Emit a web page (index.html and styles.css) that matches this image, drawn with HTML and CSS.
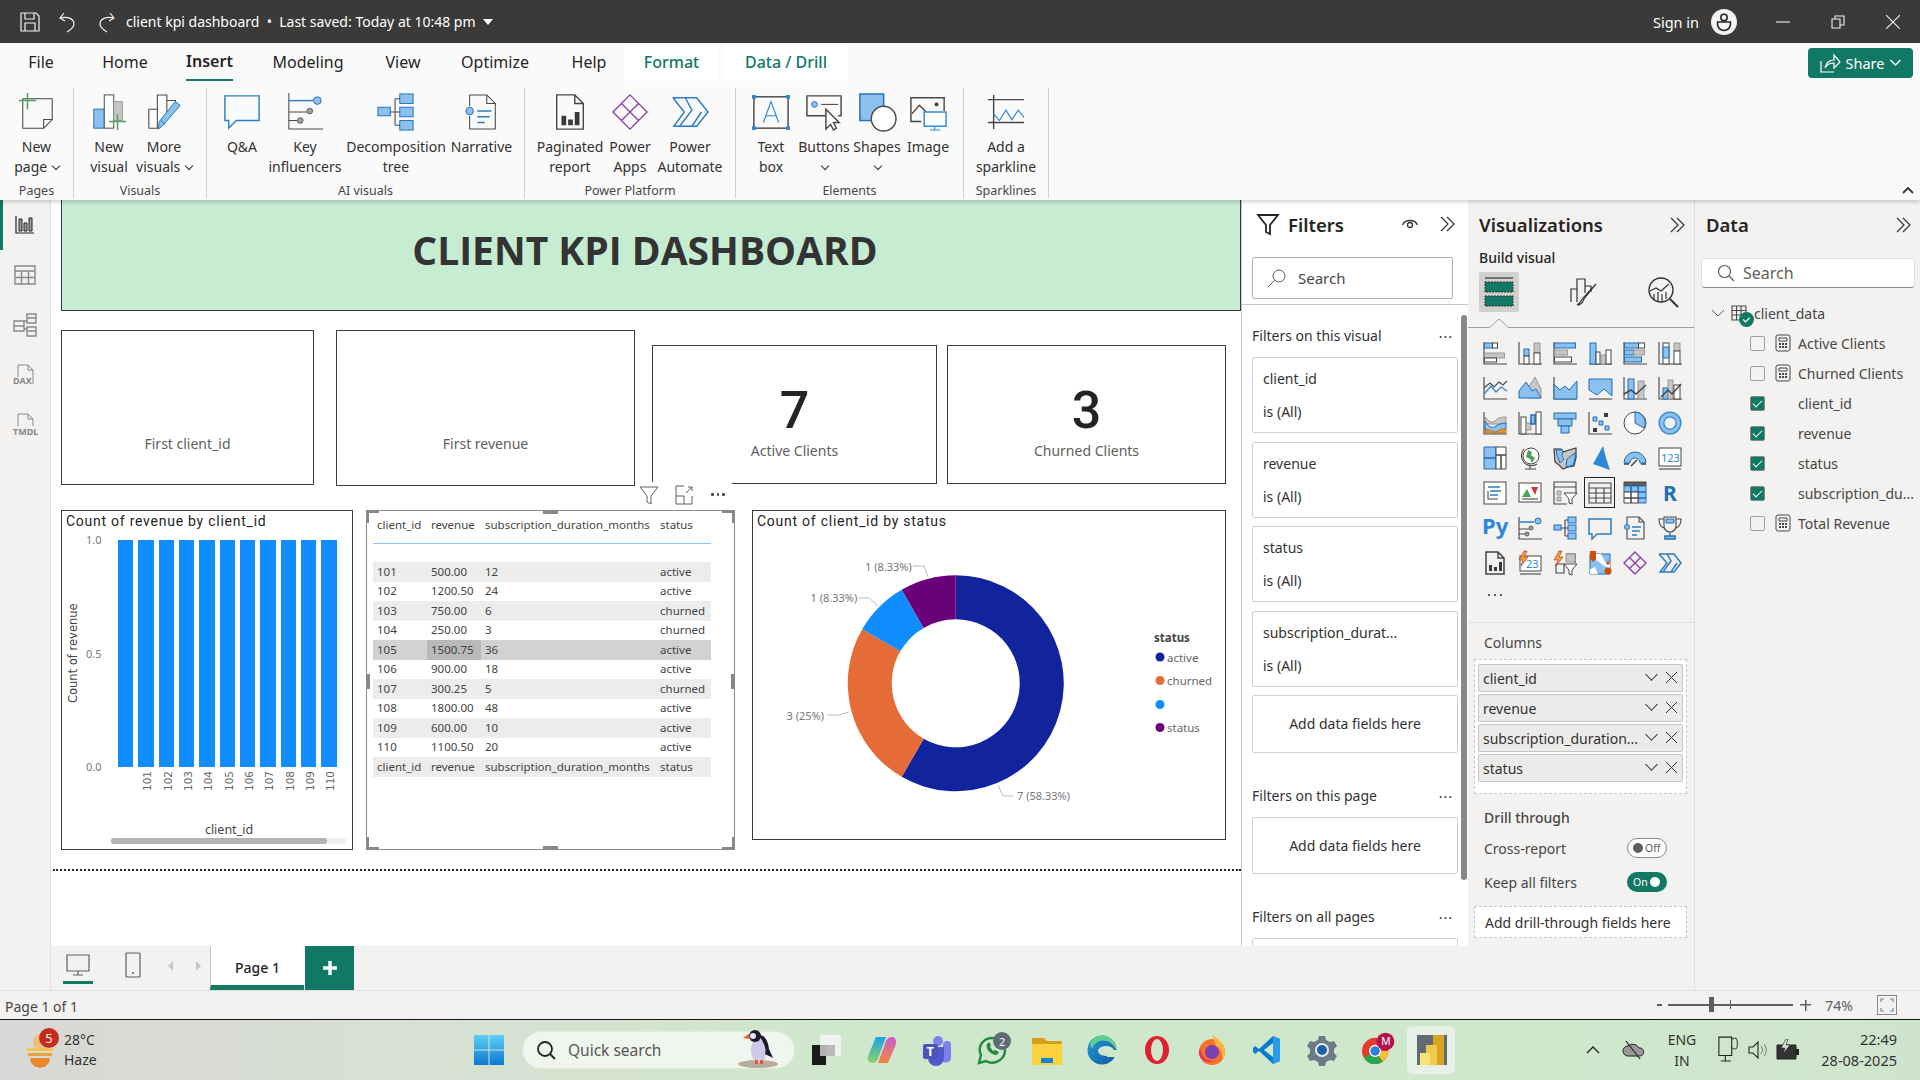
FILE: index.html
```html
<!DOCTYPE html>
<html lang="en">
<head>
    <meta charset="UTF-8">
    <title>client kpi dashboard</title>
    <link rel="stylesheet" href="styles.css">
</head>
<body>
<div class="app">
    <!-- Title bar -->
    <div class="titlebar">
        <svg class="tb-icon tb-save" viewBox="0 0 22 22"><path d="M2 2h15l3 3v15H2zM6 2v6h9V2M6 20v-8h10v8"/></svg>
        <svg class="tb-icon tb-undo" viewBox="0 0 22 22"><path d="M7 2 3 7l5 3M3 7c8-2 14 1 14 6 0 4-4 6-7 8"/></svg>
        <svg class="tb-icon tb-redo" viewBox="0 0 22 22"><path d="m15 2 4 5-5 3M19 7C11 5 5 8 5 13c0 4 4 6 7 8"/></svg>
        <span class="doc-title">client kpi dashboard&nbsp; • &nbsp;Last saved: Today at 10:48 pm</span>
        <span class="caret"></span>
        <span class="sign-in">Sign in</span>
        <svg class="avatar" viewBox="0 0 26 26"><circle cx="13" cy="13" r="13" fill="#f3f2f1"/><circle cx="13" cy="8.5" r="3.2" fill="none" stroke="#222" stroke-width="1.5"/><path d="M6.5 13h13v2a6.5 6.5 0 0 1-13 0z" fill="none" stroke="#222" stroke-width="1.5"/></svg>
        <svg class="win-btn win-min" viewBox="0 0 14 14"><path d="M0 7h14"/></svg>
        <svg class="win-btn win-max" viewBox="0 0 14 14"><path d="M1 4h8v9H1zM4 4V1h9v9H9"/></svg>
        <svg class="win-btn win-close" viewBox="0 0 14 14"><path d="m0 0 14 14M14 0 0 14"/></svg>
    </div>

    <!-- Ribbon -->
    <div class="ribbon">
        <div class="tabs">
            <div class="tab">File</div>
            <div class="tab">Home</div>
            <div class="tab tab-active"><span>Insert</span></div>
            <div class="tab">Modeling</div>
            <div class="tab">View</div>
            <div class="tab">Optimize</div>
            <div class="tab tab-help">Help</div>
            <div class="tab tab-context">Format</div>
            <div class="tab tab-context tab-data">Data / Drill</div>
        </div>
        <div class="share">
            <svg viewBox="0 0 22 22" width="22" height="22"><path d="M2 9v11h13M6 16c1-5 4-8 9-8V3l6 7-6 6v-5c-4 0-7 1-9 5z" fill="none" stroke="#fff" stroke-width="1.2"/></svg>
            <span>Share</span>
            <svg viewBox="0 0 12 8" width="13" height="8"><path d="m1 1 5 5 5-5" fill="none" stroke="#fff" stroke-width="1.3"/></svg>
        </div>
        <div class="groups">
            <div class="group g-pages">
                <div class="items">
                    <div class="item w73">
                        <svg class="rb-icon" viewBox="0 0 40 40"><path class="l" d="M5 6h31v22l-9 9H5z"/><path class="l" d="M36 28h-9v9"/><path class="gr" d="M10 0v17M1 8h18"/></svg>
                        <div>New<br>page <i class="chev"></i></div>
                    </div>
                </div>
                <div class="group-name">Pages</div>
            </div>
            <div class="group g-visuals">
                <div class="items">
                    <div class="item w54">
                        <svg class="rb-icon" viewBox="0 0 40 40"><rect class="u" x="4" y="17" width="11" height="20"/><rect class="w" x="15" y="2" width="10" height="35"/><rect class="k" x="25" y="9" width="9" height="20"/><path class="gr" d="M29 22v17M20 30h18"/></svg>
                        <div>New<br>visual</div>
                    </div>
                    <div class="item w54 item-more">
                        <svg class="rb-icon" viewBox="0 0 40 40"><path class="l" d="M4 37V17h9v20M13 37V2h10v20M23 8h9v9M4 37h10"/><path class="u" d="m14 38 1-8L32 9l5 4-18 21z"/><path class="h" d="m17 29 4 4"/></svg>
                        <div>More<br>visuals <i class="chev"></i></div>
                    </div>
                </div>
                <div class="group-name">Visuals</div>
            </div>
            <div class="group g-ai">
                <div class="items">
                    <div class="item w54">
                        <svg class="rb-icon" viewBox="0 0 40 40"><path class="h2" d="M2 3h36v26H14l-8 8v-8H2z"/></svg>
                        <div>Q&amp;A</div>
                    </div>
                    <div class="item w72">
                        <svg class="rb-icon" viewBox="0 0 40 40"><path class="l" d="M3 0v38h36"/><path class="h2" d="M3 8h26"/><circle class="u" cx="33" cy="8" r="4"/><path class="l" d="M3 20h19M3 29h9"/><circle class="k2" cx="25" cy="19" r="3"/><circle class="k2" cx="15" cy="29" r="3"/></svg>
                        <div>Key<br>influencers</div>
                    </div>
                    <div class="item w110">
                        <svg class="rb-icon" viewBox="0 0 40 40"><rect class="u" x="1" y="15" width="13" height="9"/><rect class="u" x="24" y="1" width="14" height="10"/><rect class="u" x="24" y="15" width="14" height="10"/><rect class="u" x="24" y="29" width="14" height="10"/><path class="l" d="M14 20h10M19 6v28M19 6h5M19 34h5"/></svg>
                        <div>Decomposition<br>tree</div>
                    </div>
                    <div class="item w61">
                        <svg class="rb-icon" viewBox="0 0 40 40"><path class="l" d="M7 14V2h18l9 9v27H7V24"/><path class="l" d="M25 2v9h9"/><circle class="u" cx="7" cy="19" r="4"/><path class="h2" d="M15 19h15M15 25h13M15 31h8"/></svg>
                        <div>Narrative</div>
                    </div>
                </div>
                <div class="group-name">AI visuals</div>
            </div>
            <div class="group g-power">
                <div class="items">
                    <div class="item w60">
                        <svg class="rb-icon" viewBox="0 0 40 40"><path class="l2" d="M6 2h19l9 9v27H6z"/><path class="l2" d="M25 2v9h9"/><path class="dk" d="M11 24h5v10h-5zM18 28h5v6h-5zM25 20h5v14h-5z"/></svg>
                        <div>Paginated<br>report</div>
                    </div>
                    <div class="item w60">
                        <svg class="rb-icon" viewBox="0 0 40 40"><path class="pu" d="M20 2 38 20 20 38 2 20ZM11 11 29 29M29 11 11 29"/></svg>
                        <div>Power<br>Apps</div>
                    </div>
                    <div class="item w60">
                        <svg class="rb-icon" viewBox="0 0 40 40"><path class="h2" d="M2 5h25l12 15-12 15H9l13-17L15 5M2 5l12 15L3 35h6"/><path class="h2" d="m22 35 10-15"/></svg>
                        <div>Power<br>Automate</div>
                    </div>
                </div>
                <div class="group-name">Power Platform</div>
            </div>
            <div class="group g-elements">
                <div class="items">
                    <div class="item w46">
                        <svg class="rb-icon" viewBox="0 0 40 40"><rect class="l2" x="2" y="4" width="36" height="33"/><path class="dot" d="M0 2h4v4H0zM36 2h4v4h-4zM0 35h4v4H0zM36 35h4v4h-4z"/><path class="h" d="m12 31 8-22 8 22M15 24h10"/></svg>
                        <div>Text<br>box</div>
                    </div>
                    <div class="item w60">
                        <svg class="rb-icon" viewBox="0 0 40 40"><path class="l2" d="M24 24H2V3h36v21h-3"/><circle class="u" cx="10" cy="12" r="3"/><path class="l" d="M17 12h18"/><path class="w2" d="M22 17v21l5-5 3 6 3-2-3-6h6z"/></svg>
                        <div>Buttons<br><i class="chev"></i></div>
                    </div>
                    <div class="item w46">
                        <svg class="rb-icon" viewBox="0 0 40 40"><rect class="u2" x="2" y="1" width="25" height="28"/><circle class="w2" cx="27" cy="27" r="13"/></svg>
                        <div>Shapes<br><i class="chev"></i></div>
                    </div>
                    <div class="item w56">
                        <svg class="rb-icon" viewBox="0 0 40 40"><path class="l2" d="M13 30H2V5h35v14"/><path class="l2" d="m3 22 8-9 7 7"/><circle class="dk" cx="29" cy="12" r="2"/><rect class="h3" x="16" y="20" width="23" height="15"/><path class="h" d="M27 35v4M22 39h11"/></svg>
                        <div>Image</div>
                    </div>
                </div>
                <div class="group-name">Elements</div>
            </div>
            <div class="group g-spark">
                <div class="items">
                    <div class="item w84">
                        <svg class="rb-icon" viewBox="0 0 40 40"><path class="l2" d="M7 2v36M1 7h38M1 31h38"/><path class="h" d="m7 22 6 7 7-11 6 10 7-10 6 8"/></svg>
                        <div>Add a<br>sparkline</div>
                    </div>
                </div>
                <div class="group-name">Sparklines</div>
            </div>
        </div>
        <svg class="collapse" viewBox="0 0 12 8" width="12" height="8"><path d="m1 7 5-5 5 5" fill="none" stroke="#333" stroke-width="1.8"/></svg>
    </div>

    <div class="main">
        <!-- View switcher -->
        <div class="rail">
            <div class="rail-item rail-active">
                <svg viewBox="0 0 20 20" width="20" height="20"><path d="M1 1v17h18" fill="none" stroke="#222" stroke-width="1.2"/><path d="M4 4h3v12H4zM9 8h3v8H9zM14 3h3v13h-3z" fill="#a19f9d" stroke="#222"/></svg>
            </div>
            <div class="rail-item">
                <svg viewBox="0 0 22 20" width="22" height="20"><path d="M1 1h20v18H1zM1 6h20M1 12.500h20M7.500 6v13M14.500 6v13" fill="none" stroke="#8a8886" stroke-width="1.4"/></svg>
            </div>
            <div class="rail-item">
                <svg viewBox="0 0 24 24" width="24" height="24"><path d="M1 8h10v10H1zM1 13h10M14 1h9v9h-9zM14 5h9M14 14h9v9h-9zM14 18h9M11 8h3M11 16h3" fill="none" stroke="#8a8886" stroke-width="1.4"/></svg>
            </div>
            <div class="rail-item">
                <svg viewBox="0 0 24 24" width="24" height="24"><path d="M5 14V2h10l5 5v14" fill="none" stroke="#8a8886"/><path d="M15 2v5h5" fill="none" stroke="#8a8886"/><text class="rail-txt" x="0" y="21">DAX</text></svg>
            </div>
            <div class="rail-item">
                <svg viewBox="0 0 26 24" width="26" height="24"><path d="M6 13V1h10l5 5v7" fill="none" stroke="#8a8886"/><path d="M16 1v5h5" fill="none" stroke="#8a8886"/><text class="rail-txt" x="1" y="22">TMDL</text></svg>
            </div>
        </div>

        <div class="center">
            <div class="center-top">
                <!-- Report canvas -->
                <div class="canvas">
                    <div class="visual banner">CLIENT KPI DASHBOARD</div>

                    <div class="visual card c-first-id"><div class="card-label">First client_id</div></div>
                    <div class="visual card c-first-rev"><div class="card-label">First revenue</div></div>
                    <div class="visual card c-active"><div class="card-value">7</div><div class="card-label">Active Clients</div></div>
                    <div class="visual card c-churned"><div class="card-value">3</div><div class="card-label">Churned Clients</div></div>

                    <div class="visual bar-visual">
                        <div class="viz-title">Count of revenue by client_id</div>
                        <div class="bar-body">
                            <div class="y-title">Count of revenue</div>
                            <div class="y-ticks"><span>1.0</span><span>0.5</span><span>0.0</span></div>
                            <div class="plot-col">
                                <div class="plot">
                                    <i></i><i></i><i></i><i></i><i></i><i></i><i></i><i></i><i></i><i></i><i></i>
                                </div>
                                <div class="x-ticks">
                                    <span></span><span>101</span><span>102</span><span>103</span><span>104</span><span>105</span><span>106</span><span>107</span><span>108</span><span>109</span><span>110</span>
                                </div>
                            </div>
                        </div>
                        <div class="x-title">client_id</div>
                        <div class="h-scroll"><div class="h-thumb"></div></div>
                    </div>

                    <div class="visual table-visual">
                        <table class="data-table">
                            <thead>
                                <tr><th>client_id</th><th>revenue</th><th>subscription_duration_months</th><th>status</th></tr>
                            </thead>
                            <tbody>
                                <tr class="blank"><td colspan="4"></td></tr>
                                <tr class="odd"><td>101</td><td>500.00</td><td>12</td><td>active</td></tr>
                                <tr><td>102</td><td>1200.50</td><td>24</td><td>active</td></tr>
                                <tr class="odd"><td>103</td><td>750.00</td><td>6</td><td>churned</td></tr>
                                <tr><td>104</td><td>250.00</td><td>3</td><td>churned</td></tr>
                                <tr class="sel"><td>105</td><td class="sel-cell">1500.75</td><td>36</td><td>active</td></tr>
                                <tr><td>106</td><td>900.00</td><td>18</td><td>active</td></tr>
                                <tr class="odd"><td>107</td><td>300.25</td><td>5</td><td>churned</td></tr>
                                <tr><td>108</td><td>1800.00</td><td>48</td><td>active</td></tr>
                                <tr class="odd"><td>109</td><td>600.00</td><td>10</td><td>active</td></tr>
                                <tr><td>110</td><td>1100.50</td><td>20</td><td>active</td></tr>
                                <tr class="odd"><td>client_id</td><td>revenue</td><td>subscription_duration_months</td><td>status</td></tr>
                            </tbody>
                        </table>
                        <i class="hd hd-tl"></i><i class="hd hd-tr"></i><i class="hd hd-bl"></i><i class="hd hd-br"></i>
                        <i class="hd hd-t"></i><i class="hd hd-b"></i><i class="hd hd-l"></i><i class="hd hd-r"></i>
                    </div>

                    <div class="visual-head">
                        <svg viewBox="0 0 22 22" width="22" height="22"><path d="M2 3h18l-7 9v8l-4-2v-6z" fill="none" stroke="#605e5c"/></svg>
                        <svg viewBox="0 0 20 20" width="20" height="20"><path d="M10 1H2v18h16v-8M2 11h8v8M12 8l6-6M14 2h4v4" fill="none" stroke="#605e5c"/></svg>
                        <span class="head-dots"><i></i><i></i><i></i></span>
                    </div>

                    <div class="visual donut-visual">
                        <div class="viz-title">Count of client_id by status</div>
                        <svg class="donut-svg" viewBox="753 531 472 307" width="472" height="307">
                            <path fill="#12239e" d="M955.700 575.300A108 108 0 1 1 901.700 776.800L923.700 738.700A64 64 0 1 0 955.700 619.300Z"/>
                            <path fill="#e66c37" d="M901.700 776.800A108 108 0 0 1 862.200 629.300L900.300 651.300A64 64 0 0 0 923.700 738.700Z"/>
                            <path fill="#118dff" d="M862.200 629.300A108 108 0 0 1 901.700 589.800L923.700 627.900A64 64 0 0 0 900.300 651.300Z"/>
                            <path fill="#6b007b" d="M901.700 589.800A108 108 0 0 1 955.700 575.300V619.300A64 64 0 0 0 923.700 627.900Z"/>
                            <path class="leader" d="M913 566h11l4 11M859 598h10l9 8M827 715h12l10-3M998 785l5 11h10"/>
                            <text class="d-label" x="865" y="571">1 (8.33%)</text>
                            <text class="d-label" x="810.500" y="602">1 (8.33%)</text>
                            <text class="d-label" x="786.500" y="720">3 (25%)</text>
                            <text class="d-label" x="1017" y="800">7 (58.33%)</text>
                            <text class="lg-title" x="1154" y="642">status</text>
                            <circle cx="1160" cy="657" r="4.500" fill="#12239e"/><text class="lg-item" x="1167" y="662">active</text>
                            <circle cx="1160" cy="680.500" r="4.500" fill="#e66c37"/><text class="lg-item" x="1167" y="685">churned</text>
                            <circle cx="1160" cy="704.500" r="4.500" fill="#118dff"/>
                            <circle cx="1160" cy="727.500" r="4.500" fill="#6b007b"/><text class="lg-item" x="1167" y="732">status</text>
                        </svg>
                    </div>

                    <div class="page-edge"></div>
                </div>

                <!-- Filters pane -->
                <div class="filters">
                    <div class="pane-head">
                        <svg class="funnel" viewBox="0 0 24 24" width="24" height="24"><path d="M2 3h20l-8 10v9l-4-2v-7z" fill="none" stroke="#252423" stroke-width="1.800"/></svg>
                        <span class="pane-title">Filters</span>
                        <svg class="eye" viewBox="0 0 18 14" width="18" height="14"><path d="M1.500 8C4 2 14 2 16.500 8" fill="none" stroke="#333" stroke-width="1.300"/><circle cx="9" cy="8" r="2.500" fill="none" stroke="#333" stroke-width="1.300"/></svg>
                        <svg class="double" viewBox="0 0 16 16" width="16" height="16"><path d="m1 1 7 7-7 7M7 1l7 7-7 7" fill="none" stroke="#333" stroke-width="1.200"/></svg>
                    </div>
                    <div class="f-search">
                        <svg viewBox="0 0 20 20" width="20" height="20"><circle cx="12" cy="8" r="6" fill="none" stroke="#605e5c"/><path d="m8 12-7 7" stroke="#605e5c" fill="none"/></svg>
                        <span>Search</span>
                    </div>
                    <div class="f-divider"></div>
                    <div class="f-section f-first">Filters on this visual<span class="more">...</span></div>
                    <div class="f-card"><div>client_id</div><div>is (All)</div></div>
                    <div class="f-card"><div>revenue</div><div>is (All)</div></div>
                    <div class="f-card"><div>status</div><div>is (All)</div></div>
                    <div class="f-card"><div>subscription_durat...</div><div>is (All)</div></div>
                    <div class="f-add f-add-tall">Add data fields here</div>
                    <div class="f-section">Filters on this page<span class="more">...</span></div>
                    <div class="f-add">Add data fields here</div>
                    <div class="f-section">Filters on all pages<span class="more">...</span></div>
                    <div class="f-add"></div>
                    <div class="v-scroll"></div>
                </div>
            </div>

            <!-- Page tabs -->
            <div class="pagebar">
                <div class="layout-btn layout-active">
                    <svg viewBox="0 0 24 24" width="24" height="24"><path d="M1 2h22v16H1zM12 18v4M7 22h10" fill="none" stroke="#605e5c" stroke-width="1.200"/></svg>
                </div>
                <div class="layout-btn layout-phone">
                    <svg viewBox="0 0 16 26" width="16" height="26"><rect x="1" y="1" width="14" height="24" rx="1" fill="none" stroke="#605e5c" stroke-width="1.200"/><circle cx="8" cy="21" r="1" fill="#605e5c"/></svg>
                </div>
                <i class="page-arrow arrow-left"></i>
                <i class="page-arrow arrow-right"></i>
                <div class="page-tab">Page 1</div>
                <div class="page-add">
                    <svg viewBox="0 0 14 14" width="14" height="14"><path d="M7 0v14M0 7h14" stroke="#fff" stroke-width="3.400"/></svg>
                </div>
            </div>
        </div>

        <!-- Visualizations pane -->
        <div class="viz-pane">
            <div class="viz-head"><span class="pane-title">Visualizations</span>
                <svg class="double" viewBox="0 0 16 16" width="16" height="16"><path d="m1 1 7 7-7 7M7 1l7 7-7 7" fill="none" stroke="#333" stroke-width="1.200"/></svg>
            </div>
            <div class="build-label">Build visual</div>
            <div class="build-tabs">
                <div class="build-tab build-tab-active">
                    <svg viewBox="0 0 32 32" width="32" height="32"><path d="M2 2h28" stroke="#333" stroke-width="1.200"/><rect x="2" y="6" width="28" height="10" fill="#117865" stroke="#333" stroke-dasharray="2 1"/><rect x="2" y="20" width="28" height="10" fill="#117865" stroke="#333" stroke-dasharray="2 1"/></svg>
                </div>
                <div class="build-tab">
                    <svg viewBox="0 0 30 30" width="30" height="30"><path d="M3 25V12h6v13M9 12V2h8v14M17 9h6v6" fill="none" stroke="#333" stroke-width="1.200"/><path d="M9 28c5 0 6-4 7-6l12-15-11 12c-3 2-4 7-8 9z" fill="#fff" stroke="#333" stroke-width="1.200"/></svg>
                </div>
                <div class="build-tab">
                    <svg viewBox="0 0 32 32" width="32" height="32"><circle cx="14" cy="14" r="12" fill="none" stroke="#333" stroke-width="1.400"/><path d="m23 23 8 8" stroke="#333" stroke-width="2"/><path d="m3 15 6-3 5 3 8-7" fill="none" stroke="#333" stroke-width="1.200"/><path d="M7 18v6M11 16v9M15 18v7M19 16v7" stroke="#333" stroke-width="1.200"/></svg>
                </div>
            </div>
            <div class="build-line"><svg viewBox="0 0 22 10" width="22" height="10"><path d="M0 10h1l10-9 10 9h1" fill="#f3f2f1" stroke="#a19f9d"/></svg></div>

            <div class="gallery">
                <!-- row 1 -->
                <div class="gi"><svg viewBox="0 0 24 24"><path class="l" d="M1 1v22h23"/><rect class="u" x="1.500" y="2" width="8" height="5"/><rect class="w" x="9.500" y="2" width="5" height="5"/><rect class="k" x="1.500" y="12" width="20" height="5"/><rect class="w" x="1.500" y="17" width="12" height="4"/></svg></div>
                <div class="gi"><svg viewBox="0 0 24 24"><path class="l" d="M1 1v22h23"/><rect class="u" x="6" y="8" width="5" height="7"/><rect class="w" x="6" y="15" width="5" height="8"/><rect class="k" x="16" y="2" width="6" height="10"/><rect class="w" x="16" y="12" width="6" height="11"/></svg></div>
                <div class="gi"><svg viewBox="0 0 24 24"><path class="l" d="M1 1v22h23"/><rect class="u" x="1.500" y="2" width="21" height="5"/><rect class="k" x="1.500" y="9" width="13" height="5"/><rect class="w" x="1.500" y="16" width="17" height="5"/></svg></div>
                <div class="gi"><svg viewBox="0 0 24 24"><path class="l" d="M1 23h23"/><rect class="u" x="2" y="2" width="6" height="21"/><rect class="w" x="8" y="11" width="4" height="12"/><rect class="k" x="13" y="14" width="5" height="9"/><rect class="w" x="18" y="9" width="5" height="14"/></svg></div>
                <div class="gi"><svg viewBox="0 0 24 24"><path class="l" d="M1 1v22h23"/><rect class="u" x="1.500" y="2" width="14" height="5"/><rect class="w" x="15.500" y="2" width="6" height="5"/><rect class="u" x="1.500" y="9" width="9" height="5"/><rect class="k" x="10.500" y="9" width="11" height="5"/><rect class="u" x="1.500" y="16" width="17" height="5"/></svg></div>
                <div class="gi"><svg viewBox="0 0 24 24"><path class="l" d="M1 1v22h23"/><rect class="w" x="5" y="2" width="6" height="21"/><rect class="u" x="5" y="6" width="6" height="11"/><rect class="k" x="16" y="2" width="6" height="8"/><rect class="w" x="16" y="10" width="6" height="13"/></svg></div>
                <!-- row 2 -->
                <div class="gi"><svg viewBox="0 0 24 24"><path class="l" d="M1 1v22h23M1 12l6-5 4 4 5-5 4 3 4-4"/><path class="h" d="m1 18 7-8 5 6 5-5 6 4"/></svg></div>
                <div class="gi"><svg viewBox="0 0 24 24"><path class="k" d="m10 12 7-11 6 12v9H10z"/><path class="u" d="M1 22v-7l7-9 6 9 4-2 5 9z"/></svg></div>
                <div class="gi"><svg viewBox="0 0 24 24"><path class="l" d="M1 1v22h23"/><path class="u" d="M1 8l6 6 5-4 4 4 8-9v18H1z"/></svg></div>
                <div class="gi"><svg viewBox="0 0 24 24"><path class="l" d="M1 23h23"/><path class="u" d="M1 3h23v17l-8-7-7 6-8-5z"/></svg></div>
                <div class="gi"><svg viewBox="0 0 24 24"><path class="l" d="M1 1v22h23"/><rect class="u" x="5" y="3" width="6" height="20"/><rect class="k" x="15" y="5" width="6" height="18"/><path class="l2" d="m1 18 7-4 5 4 10-9"/></svg></div>
                <div class="gi"><svg viewBox="0 0 24 24"><path class="l" d="M1 1v22h23"/><rect class="u" x="5" y="12" width="5" height="11"/><rect class="k" x="10" y="4" width="5" height="19"/><rect class="w" x="16" y="9" width="6" height="14"/><path class="l2" d="m3 21 7-7 4 4 9-10"/></svg></div>
                <!-- row 3 -->
                <div class="gi"><svg viewBox="0 0 24 24"><path class="l" d="M1 1v22h23"/><path class="k" d="M2 6c5 6 8 6 11 3 3-3 7-3 10-3v7H2z"/><path class="u" d="M2 10c5 8 8 7 11 5s7-3 10-3v6c-4 0-7 5-11 4s-6-3-10-3z"/><path class="or" d="M2 19h6l3 2 4-1 3-2h5v4H2z"/></svg></div>
                <div class="gi"><svg viewBox="0 0 24 24"><path class="l" d="M1 1v22h23"/><rect class="w" x="3" y="6" width="5" height="17"/><rect class="k" x="8" y="12" width="5" height="7"/><rect class="u2" x="13" y="4" width="4" height="9"/><rect class="w" x="18" y="1" width="5" height="22"/></svg></div>
                <div class="gi"><svg viewBox="0 0 24 24"><rect class="u" x="1" y="2" width="22" height="6"/><rect class="u" x="5" y="8" width="14" height="7"/><rect class="u" x="8" y="15" width="8" height="7"/></svg></div>
                <div class="gi"><svg viewBox="0 0 24 24"><path class="l" d="M1 1v22h23"/><path class="dk" d="M16 2h4v4h-4zM5 17h4v4H5z"/><path class="u" d="M5 6h4v4H5zM11 10h4v4h-4zM17 15h4v4h-4z"/></svg></div>
                <div class="gi"><svg viewBox="0 0 24 24"><circle class="w" cx="12" cy="12" r="11"/><path class="u" d="M12 1a11 11 0 0 1 9 16l-9-5z"/></svg></div>
                <div class="gi"><svg viewBox="0 0 24 24"><circle class="ring" cx="12" cy="12" r="8.500"/><circle class="ring-g" cx="12" cy="12" r="8.500"/></svg></div>
                <!-- row 4 -->
                <div class="gi"><svg viewBox="0 0 24 24"><path class="u" d="M1 1h12v11H1zM1 12h12v11H1z"/><path class="w" d="M13 1h10v8H13zM13 9h5v14h-5zM18 9h5v14h-5z"/></svg></div>
                <div class="gi"><svg viewBox="0 0 24 24"><path class="l" d="M7 23h11M12 19v4M6 3a10 10 0 0 0 13 15"/><circle class="w" cx="13" cy="10" r="8"/><path class="gn" d="M10 4l4 2-1 3 4 3-3 5-2-4-4-2z"/></svg></div>
                <div class="gi"><svg viewBox="0 0 24 24"><path class="k" d="M1 3h7l2 3 6-2 7-2v10l-2 8-6 1-5 2-4-4-4-3z"/><path class="l" d="M1 3h7l2 3 6-2 7-2v10l-2 8-6 1-5 2-4-4-4-3z"/><path class="u" d="M3 4h7l-1 6 2 3-4 4-3-8zM14 13l8-6v5l-2 7-7 2z"/></svg></div>
                <div class="gi"><svg viewBox="0 0 24 24"><path class="az" d="M15 0 5 18l17 6-4-12z"/></svg></div>
                <div class="gi"><svg viewBox="0 0 24 24"><path class="u" d="M1 17a11 11 0 0 1 22 0h-6a5 5 0 0 0-10 0z"/><path class="l2" d="M1 18h5M18 18h5M8 20l6-6"/></svg></div>
                <div class="gi"><svg viewBox="0 0 24 24"><rect class="w" x="1" y="2" width="22" height="18"/><path class="l" d="M1 23h22"/><text class="g-txt" x="3" y="16">123</text></svg></div>
                <!-- row 5 -->
                <div class="gi"><svg viewBox="0 0 24 24"><rect class="w" x="1" y="1" width="22" height="22"/><path class="h2" d="M5 6h12M7 10h11M7 14h8"/><path class="l" d="M5 10v8h10"/></svg></div>
                <div class="gi"><svg viewBox="0 0 24 24"><rect class="w" x="1" y="2" width="22" height="19"/><path fill="#4ea45f" d="m4 16 5-8 4 8z"/><path fill="#d13438" d="m13 6 7 0-3 8z"/><path class="l" d="M4 18h16"/></svg></div>
                <div class="gi"><svg viewBox="0 0 24 24"><path class="l" d="M14 23H1V1h22v12M1 6h22"/><path class="k" d="M4 10h4v4H4zM4 16h4v4H4z"/><path class="w" d="M11 12h13l-5 6v5l-3-1v-4z"/></svg></div>
                <div class="gi gi-selected"><svg viewBox="0 0 24 24"><path class="l" d="M1 2h22v20H1zM1 7h22M1 12h22M1 17h22M8 7v15M16 7v15"/></svg></div>
                <div class="gi"><svg viewBox="0 0 24 24"><path class="dk2" d="M1 1h22v4H1z"/><path class="u" d="M1 5h7v6H1zM8 5h7v6H8zM15 5h8v6h-8zM15 11h8v6h-8zM15 17h8v5h-8z"/><path class="w" d="M1 11h7v6H1zM8 11h7v6H8zM1 17h7v5H1zM8 17h7v5H8z"/></svg></div>
                <div class="gi"><svg viewBox="0 0 24 24"><text class="g-letter" x="5" y="20">R</text></svg></div>
                <!-- row 6 -->
                <div class="gi"><svg viewBox="0 0 24 24"><text class="g-letter g-py" x="-1" y="18">Py</text></svg></div>
                <div class="gi"><svg viewBox="0 0 24 24"><path class="l" d="M1 1v22h23"/><path class="h2" d="M1 6h15"/><circle class="u" cx="20" cy="5" r="3"/><path class="l" d="M1 13h10M1 18h6"/><circle class="k2" cx="13" cy="12" r="2"/><circle class="k2" cx="9" cy="18" r="2"/></svg></div>
                <div class="gi"><svg viewBox="0 0 24 24"><rect class="u" x="1" y="9" width="7" height="5"/><rect class="u" x="15" y="1" width="8" height="6"/><rect class="u" x="15" y="9" width="8" height="6"/><rect class="u" x="15" y="17" width="8" height="6"/><path class="l" d="M8 12h7M12 4v16M12 4h3M12 20h3"/></svg></div>
                <div class="gi"><svg viewBox="0 0 24 24"><path class="h2" d="M1 3h22v15H9l-5 5v-5H1z"/></svg></div>
                <div class="gi"><svg viewBox="0 0 24 24"><path class="l" d="M4 8V1h12l5 5v17H4v-9"/><path class="l" d="M16 1v5h5"/><circle class="u" cx="4" cy="11" r="2.500"/><path class="h2" d="M9 11h9M9 15h8M9 19h5"/></svg></div>
                <div class="gi"><svg viewBox="0 0 24 24"><path class="l" d="M6 1h12v9a6 6 0 0 1-12 0zM6 3H1c0 6 2 8 5 9M18 3h5c0 6-2 8-5 9M12 16v4"/><path class="u" d="M8 3h8v4H8z"/><path class="u2" d="M7 20h10v3H7z"/></svg></div>
                <!-- row 7 -->
                <div class="gi"><svg viewBox="0 0 24 24"><path class="l2" d="M3 1h12l6 6v16H3z"/><path class="l2" d="M15 1v6h6"/><path class="dk" d="M6 14h3v6H6zM11 16h3v4h-3zM16 11h3v9h-3z"/></svg></div>
                <div class="gi"><svg viewBox="0 0 24 24"><rect class="w" x="2" y="5" width="21" height="15"/><path class="l" d="M2 23h21"/><path fill="#f2a33a" stroke="#a4262c" stroke-width=".6" d="m6 0-5 9h4L3 15l7-9H6l3-6z"/><text class="g-txt" x="8" y="17">23</text></svg></div>
                <div class="gi"><svg viewBox="0 0 24 24"><path class="l" d="M13 3h9v9M3 13h8v9H3z"/><rect class="k" x="13" y="3" width="9" height="8"/><path class="w" d="M11 13h13l-5 6v5l-3-1v-4z"/><path fill="#f2a33a" stroke="#a4262c" stroke-width=".6" d="m6 0-5 9h4L3 15l7-9H6l3-6z"/></svg></div>
                <div class="gi"><svg viewBox="0 0 24 24"><path class="u" d="M2 3h20v20H2z"/><path fill="#fff" d="M8 3h5l4 8h5v6l-6-2-5-4-3-2zM2 18l5-2 3 7H2z"/><path fill="#ca5010" d="M2 0h6v8l-3 3-3-3z"/><circle cx="20" cy="20" r="3.500" fill="#ca5010"/><circle cx="20" cy="12" r="1.800" fill="#ca5010"/></svg></div>
                <div class="gi"><svg viewBox="0 0 24 24"><path class="pu" d="M12 1 23 12 12 23 1 12zM6.500 6.500 17.500 17.500M17.500 6.500 6.500 17.500"/></svg></div>
                <div class="gi"><svg viewBox="0 0 24 24"><path class="h2" d="M1 3h15l7 9-7 9H5l8-11-4-7M1 3l8 9-7 9h3M13 21l6-9"/></svg></div>
                <div class="gi gi-more"><span></span><span></span><span></span></div>
            </div>

            <div class="viz-divider"></div>
            <div class="well-label">Columns</div>
            <div class="well">
                <div class="pill"><span>client_id</span><i class="p-chev"></i><i class="p-x"></i></div>
                <div class="pill"><span>revenue</span><i class="p-chev"></i><i class="p-x"></i></div>
                <div class="pill"><span>subscription_duration...</span><i class="p-chev"></i><i class="p-x"></i></div>
                <div class="pill"><span>status</span><i class="p-chev"></i><i class="p-x"></i></div>
            </div>
            <div class="drill-title">Drill through</div>
            <div class="drill-row dr-cross"><span>Cross-report</span><div class="toggle toggle-off"><i></i><b>Off</b></div></div>
            <div class="drill-row dr-keep"><span>Keep all filters</span><div class="toggle toggle-on"><b>On</b><i></i></div></div>
            <div class="drill-add">Add drill-through fields here</div>
        </div>

        <!-- Data pane -->
        <div class="data-pane">
            <div class="data-head"><span class="pane-title">Data</span>
                <svg class="double" viewBox="0 0 16 16" width="16" height="16"><path d="m1 1 7 7-7 7M7 1l7 7-7 7" fill="none" stroke="#333" stroke-width="1.200"/></svg>
            </div>
            <div class="d-search">
                <svg viewBox="0 0 18 18" width="18" height="18"><circle cx="7.500" cy="7.500" r="6" fill="none" stroke="#605e5c" stroke-width="1.200"/><path d="m12 12 5 5" stroke="#605e5c" stroke-width="1.200"/></svg>
                <span>Search</span>
            </div>
            <div class="tree-root">
                <svg class="tree-chev" viewBox="0 0 14 8" width="14" height="8"><path d="m1 1 6 6 6-6" fill="none" stroke="#605e5c"/></svg>
                <span class="tree-table">
                    <svg viewBox="0 0 16 16" width="16" height="16"><path d="M1 1h14v14H1zM1 5.500h14M1 10h14M5.500 1v14M10 1v14" fill="none" stroke="#484644" stroke-width="1.100"/></svg>
                    <svg class="tree-badge" viewBox="0 0 16 16" width="15" height="15"><circle cx="8" cy="8" r="8" fill="#117865"/><path d="m4.500 8 2.500 2.500 4.500-4.500" fill="none" stroke="#fff" stroke-width="1.400"/></svg>
                </span>
                <span>client_data</span>
            </div>
            <div class="field"><i class="cb"></i><svg class="calc" viewBox="0 0 16 18" width="16" height="18"><path d="M3 1h10a2 2 0 0 1 2 2v12a2 2 0 0 1-2 2H3a2 2 0 0 1-2-2V3a2 2 0 0 1 2-2zM4 4h8v3H4z" fill="none" stroke="#484644"/><path d="M4 9h2v2H4zM7 9h2v2H7zM10 9h2v2h-2zM4 12h2v2H4zM7 12h2v2H7zM10 12h2v2h-2z" fill="#484644"/></svg><span>Active Clients</span></div>
            <div class="field"><i class="cb"></i><svg class="calc" viewBox="0 0 16 18" width="16" height="18"><path d="M3 1h10a2 2 0 0 1 2 2v12a2 2 0 0 1-2 2H3a2 2 0 0 1-2-2V3a2 2 0 0 1 2-2zM4 4h8v3H4z" fill="none" stroke="#484644"/><path d="M4 9h2v2H4zM7 9h2v2H7zM10 9h2v2h-2zM4 12h2v2H4zM7 12h2v2H7zM10 12h2v2h-2z" fill="#484644"/></svg><span>Churned Clients</span></div>
            <div class="field"><i class="cb cb-on"></i><span class="calc"></span><span>client_id</span></div>
            <div class="field"><i class="cb cb-on"></i><span class="calc"></span><span>revenue</span></div>
            <div class="field"><i class="cb cb-on"></i><span class="calc"></span><span>status</span></div>
            <div class="field"><i class="cb cb-on"></i><span class="calc"></span><span>subscription_du...</span></div>
            <div class="field"><i class="cb"></i><svg class="calc" viewBox="0 0 16 18" width="16" height="18"><path d="M3 1h10a2 2 0 0 1 2 2v12a2 2 0 0 1-2 2H3a2 2 0 0 1-2-2V3a2 2 0 0 1 2-2zM4 4h8v3H4z" fill="none" stroke="#484644"/><path d="M4 9h2v2H4zM7 9h2v2H7zM10 9h2v2h-2zM4 12h2v2H4zM7 12h2v2H7zM10 12h2v2h-2z" fill="#484644"/></svg><span>Total Revenue</span></div>
        </div>
    </div>

    <!-- Status bar -->
    <div class="statusbar">
        <span class="page-count">Page 1 of 1</span>
        <div class="zoom">
            <span class="z-minus"></span>
            <div class="z-track"><i class="z-mid"></i><i class="z-thumb"></i></div>
            <span class="z-plus"></span>
            <span class="z-val">74%</span>
            <svg class="z-fit" viewBox="0 0 20 20" width="20" height="20"><rect x=".5" y=".5" width="19" height="19" fill="#f3f2f1" stroke="#8a8886"/><path d="M7 4H4v3M13 4h3v3M7 16H4v-3M13 16h3v-3" fill="none" stroke="#5b8fb9" stroke-width="1.200"/></svg>
        </div>
    </div>

    <!-- Windows taskbar -->
    <div class="taskbar">
        <div class="weather">
            <svg class="w-icon" viewBox="0 0 30 36" width="30" height="36"><path fill="#f6c453" d="M2 16h26v3H2z"/><path fill="#e9a13b" d="M3 21h24v3H3z"/><path fill="#e9862e" d="M5 26h20a10 10 0 0 1-20 0z"/><circle cx="16" cy="10" r="8" fill="#f2b84b" opacity=".7"/></svg>
            <span class="w-badge">5</span>
            <div class="w-text"><div>28°C</div><div>Haze</div></div>
        </div>
        <div class="start">
            <svg viewBox="0 0 30 30" width="30" height="30"><defs><linearGradient id="wg" x1="0" y1="0" x2="0" y2="1"><stop offset="0" stop-color="#5fd0f5"/><stop offset="1" stop-color="#0a78d4"/></linearGradient></defs><path fill="url(#wg)" d="M0 0h14.500v14.500H0zM15.500 0H30v14.500H15.500zM0 15.500h14.500V30H0zM15.500 15.500H30V30H15.500z"/></svg>
        </div>
        <div class="tb-search">
            <svg viewBox="0 0 20 20" width="20" height="20"><circle cx="9" cy="9" r="7" fill="none" stroke="#222" stroke-width="1.800"/><path d="m14 14 5 5" stroke="#222" stroke-width="1.800"/></svg>
            <span>Quick search</span>
            <svg class="puffin" viewBox="0 0 42 40" width="42" height="40"><ellipse cx="21" cy="36" rx="20" ry="4" fill="#b7ab9c"/><ellipse cx="22" cy="22" rx="8" ry="13" fill="#cfc8e8"/><path d="M22 7c6 0 9 6 10 14l4 9-8-4c2-6-2-12-6-19z" fill="#1c1b2b"/><circle cx="18" cy="8" r="6" fill="#1c1b2b"/><circle cx="16" cy="8" r="3" fill="#e8e4f0"/><path d="m12 6-6 4 7 1z" fill="#e8562a"/><path d="M18 32h3v4h-3zM23 32h3v4h-3z" fill="#e8562a"/></svg>
        </div>
        <div class="apps">
            <div class="app-icon"><svg viewBox="0 0 30 30"><rect x="0" y="10" width="14" height="20" fill="#1a1a1a"/><rect x="8" y="0" width="21" height="21" fill="#f5f5f5" opacity=".85"/><rect x="8" y="10" width="15" height="11" fill="#aaa" opacity=".8"/></svg></div>
            <div class="app-icon"><svg viewBox="0 0 30 30"><defs><linearGradient id="cp1" x1="0" y1="0" x2="0" y2="1"><stop offset="0" stop-color="#1f9fe8"/><stop offset="1" stop-color="#8bd45f"/></linearGradient><linearGradient id="cp2" x1="0" y1="0" x2="0" y2="1"><stop offset="0" stop-color="#c85ad2"/><stop offset="1" stop-color="#f5873a"/></linearGradient></defs><path d="M9 2h10l-7 19c-1 4-3 7-7 7-3 0-5-3-4-7z" fill="url(#cp1)"/><path d="M21 28H11l7-19c1-4 3-7 7-7 3 0 5 3 4 7z" fill="url(#cp2)"/></svg></div>
            <div class="app-icon"><svg viewBox="0 0 30 30"><circle cx="25" cy="10" r="4" fill="#7b83eb"/><circle cx="16" cy="6" r="5" fill="#7b83eb"/><path d="M18 12h11v11c0 6-10 6-11 0z" fill="#7b83eb"/><path d="M6 12h16v11a8 8 0 0 1-16 0z" fill="#5059c9"/><rect x="1" y="9" width="15" height="15" rx="2" fill="#4b53bc"/><text class="app-t" x="4.500" y="21">T</text></svg></div>
            <div class="app-icon"><svg viewBox="0 0 30 30"><path d="M2 28l2-8C0 12 6 3 15 3c8 0 13 6 13 12 0 9-10 16-19 11z" fill="none" stroke="#25883f" stroke-width="2.400"/><path d="M10 9c-2 4 3 11 10 11l2-3-4-2-2 1-3-4 1-2-2-3z" fill="#25883f"/><circle cx="25" cy="6" r="9" fill="#5f6b75"/><text class="app-b" x="22" y="10.500">2</text></svg></div>
            <div class="app-icon"><svg viewBox="0 0 30 30"><path d="M0 3h12l3 3h15v6H0z" fill="#d79f1c"/><path d="M0 9h30v21H0z" fill="#fcd33f"/><path d="M9 23h12v5H9z" fill="#1283d6"/></svg></div>
            <div class="app-icon"><svg viewBox="0 0 30 30"><defs><linearGradient id="eg" x1="0" y1="0" x2="1" y2="1"><stop offset="0" stop-color="#2a9ad8"/><stop offset="1" stop-color="#0c59a4"/></linearGradient></defs><circle cx="15" cy="15" r="14.500" fill="url(#eg)"/><path d="M5 14C7 7 14 4 20 6c5 2 8 6 9.500 10C30 7 23 .5 15 .5 9 .5 5 4 3 9z" fill="#5fd08a"/><ellipse cx="19" cy="16" rx="8" ry="5" fill="#cfe8cc"/><path d="M20 15h11v7H20z" fill="#cfe8cc"/></svg></div>
            <div class="app-icon"><svg viewBox="0 0 30 30"><ellipse cx="15" cy="15" rx="12" ry="14" fill="#e0202c"/><ellipse cx="15" cy="15" rx="6" ry="11" fill="#cfe8cc"/></svg></div>
            <div class="app-icon"><svg viewBox="0 0 30 30"><circle cx="15" cy="17" r="13" fill="#f6712c"/><path d="M15 0c6 4 13 8 13 17 0 3-1 6-3 8 1-6-1-12-6-14z" fill="#ffb63a"/><circle cx="15" cy="17" r="7" fill="#7d3fb8"/><path d="M3 13c1 8 6 14 15 13-8 3-16-1-16-9z" fill="#e2335a"/></svg></div>
            <div class="app-icon"><svg viewBox="0 0 30 30"><path d="M21 1 28 4v22l-7 3L7 16l-4 3-2-2v-4l2-2 4 3z" fill="#0a7cd0"/><path d="M21 8v14l-9-7z" fill="#cfe8cc"/><path d="M21 1 28 4v22l-7 3z" fill="#2a9de8"/></svg></div>
            <div class="app-icon"><svg viewBox="0 0 30 30"><path d="M12 1h6l1 4 4 2 4-1 3 5-3 3v4l3 3-3 5-4-1-4 2-1 4h-6l-1-4-4-2-4 1-3-5 3-3v-4L0 11l3-5 4 1 4-2z" fill="#6e7a85"/><circle cx="15" cy="15" r="7" fill="#e6ecef"/><circle cx="15" cy="15" r="5" fill="#1f5fa8"/></svg></div>
            <div class="app-icon"><svg viewBox="0 0 32 32"><circle cx="14" cy="17" r="14" fill="#e33b2e"/><path d="M14 17 2 24c4 8 14 9 20 4z" fill="#2da44e"/><path d="M14 17l14 0c0 5-3 9-6 11z" fill="#fbc02d"/><circle cx="14" cy="17" r="6.500" fill="#fff"/><circle cx="14" cy="17" r="5" fill="#2f7de1"/><circle cx="25" cy="7" r="9.500" fill="#b2124f"/><text class="app-b" x="20.500" y="11">M</text></svg></div>
            <div class="app-icon app-active"><svg viewBox="0 0 30 30"><rect x="0" y="0" width="30" height="30" fill="#5f6b75"/><rect x="16" y="0" width="11" height="30" fill="#d8a51e"/><rect x="9" y="10" width="11" height="20" fill="#f2c94c"/><rect x="3" y="18" width="10" height="12" fill="#f8e27a"/></svg></div>
        </div>
        <div class="tray">
            <svg class="tray-up" viewBox="0 0 14 8" width="14" height="8"><path d="m1 7 6-6 6 6" fill="none" stroke="#222" stroke-width="1.300"/></svg>
            <svg class="tray-net" viewBox="0 0 22 22" width="22" height="22"><path d="M6 17a5 5 0 0 1 0-10 7 7 0 0 1 11 2 4 4 0 0 1 1 8z" fill="#999" stroke="#222"/><path d="m4 2 14 18" stroke="#222" stroke-width="1.200"/></svg>
            <div class="lang"><div>ENG</div><div>IN</div></div>
            <svg class="tray-mon" viewBox="0 0 24 30" width="22" height="28"><path d="M1 1h14v20H1zM8 21v6M3 27h11" fill="none" stroke="#222" stroke-width="1.200"/><rect x="15" y="2" width="6" height="12" rx="3" fill="#cfe8cc" stroke="#222"/></svg>
            <svg class="tray-vol" viewBox="0 0 22 22" width="22" height="22"><path d="M2 8h4l5-5v16l-5-5H2z" fill="none" stroke="#222" stroke-width="1.100"/><path d="M14 7c2 3 2 5 0 8M17 5c3 4 3 8 0 12" fill="none" stroke="#777"/></svg>
            <svg class="tray-bat" viewBox="0 0 24 22" width="24" height="22"><path d="M1 6h19v14H1z" fill="#333" stroke="#222"/><path d="M20 10h3v6h-3z" fill="#222"/><path d="m10 0-5 9h4l-2 6 7-9h-4l2-6z" fill="#d0e6cc" stroke="#222" stroke-width=".6"/></svg>
            <div class="clock"><div>22:49</div><div>28-08-2025</div></div>
        </div>
    </div>
</div>
</body>
</html>
```

FILE: styles.css
```css
html, body {
    margin: 0;
    padding: 0;
    height: 100%;
    overflow: hidden;
}
body {
    font-family: "Noto Sans", "Open Sans", sans-serif;
    color: #252423;
}
.app {
    width: 1920px;
    height: 1080px;
    display: flex;
    flex-direction: column;
    overflow: hidden;
}

/* shared icon strokes */
.l { fill: none; stroke: #484644; stroke-width: 1.1; }
.l2 { fill: none; stroke: #484644; stroke-width: 1.5; }
.w { fill: #fff; stroke: #484644; stroke-width: 1; }
.w2 { fill: #fff; stroke: #484644; stroke-width: 1.5; }
.u { fill: #8cc0ee; stroke: #1f6fb5; stroke-width: 1; }
.u2 { fill: #8cc0ee; stroke: #1f6fb5; stroke-width: 1.5; }
.h { fill: none; stroke: #2b88d8; stroke-width: 1.2; }
.h2 { fill: none; stroke: #2b7cc0; stroke-width: 1.5; }
.h3 { fill: #fff; stroke: #2b88d8; stroke-width: 1.5; }
.k { fill: #c8c6c4; stroke: #8a8886; stroke-width: .8; }
.k2 { fill: #a19f9d; stroke: #605e5c; stroke-width: 1; }
.gr { fill: none; stroke: #4ea45f; stroke-width: 1.6; }
.dk { fill: #3b3a39; }
.dk2 { fill: #605e5c; stroke: #484644; }
.pu { fill: none; stroke: #8a3fa8; stroke-width: 1.4; }
.dot { fill: #2b88d8; }
.or { fill: #e8912d; stroke: #a4620f; stroke-width: .6; }
.gn { fill: #4ea45f; }
.az { fill: #2b88d8; }
.ring { fill: none; stroke: #2b88d8; stroke-width: 6; }
.ring-g { fill: none; stroke: #8cc0ee; stroke-width: 3.500; }
.g-txt { font: 11px "Noto Sans", sans-serif; fill: #2b88d8; }
.g-letter { font: bold 21px "Noto Sans", sans-serif; fill: #1f6fb5; }
.g-py { font-size: 22px; fill: #2b88d8; }

/* title bar */
.titlebar {
    height: 43px;
    background-color: #3b3a39;
    color: white;
    display: flex;
    align-items: center;
    flex-shrink: 0;
}
.tb-icon {
    width: 22px;
    height: 22px;
    fill: none;
    stroke: #f3f2f1;
    stroke-width: 1.2;
}
.tb-save { margin-left: 19px; }
.tb-undo { margin-left: 16px; }
.tb-redo { margin-left: 16px; }
.doc-title { margin-left: 9px; font-size: 14px; white-space: nowrap; width: 348px; }
.caret {
    margin-left: 9px;
    border-left: 5.5px solid transparent;
    border-right: 5.5px solid transparent;
    border-top: 6px solid white;
}
.sign-in { margin-left: auto; font-size: 14.5px; }
.avatar { width: 26px; height: 26px; margin-left: 12px; margin-right: 39px; }
.win-btn { width: 14px; height: 14px; fill: none; stroke: #f3f2f1; stroke-width: 1.1; }
.win-max { margin-left: 41px; }
.win-close { margin-left: 41px; margin-right: 20px; }

/* ribbon */
.ribbon {
    height: 157px;
    background-color: #fafafa;
    position: relative;
    z-index: 3;
    flex-shrink: 0;
    box-shadow: 0 2px 4px rgba(0, 0, 0, 0.18);
}
.tabs {
    height: 38px;
    display: grid;
    grid-template-columns: 82px 86px 83px 114px 76px 108px 75px 95px 129px;
    font-size: 16px;
}
.tab {
    display: flex;
    align-items: center;
    justify-content: center;
    color: #252423;
}
.tab-active { font-weight: 600; }
.tab-active span {
    height: 36px;
    line-height: 36px;
    border-bottom: 2px solid #117865;
}
.tab-help { padding-left: 5px; }
.tab-context {
    background-color: #fff;
    color: #117865;
    font-weight: 500;
}
.tab-data { margin-left: 5px; }
.share {
    position: absolute;
    top: 5px;
    left: 1808px;
    width: 105px;
    height: 30px;
    background-color: #117865;
    border-radius: 4px;
    color: white;
    font-size: 14.5px;
    display: flex;
    align-items: center;
    justify-content: center;
    gap: 5px;
}
.groups {
    display: flex;
    margin-top: 7px;
    height: 110px;
}
.group {
    display: flex;
    flex-direction: column;
    border-right: 1px solid #d2d0ce;
    box-sizing: border-box;
}
.g-pages { width: 74px; }
.g-visuals { width: 133px; }
.g-visuals .items, .g-ai .items { padding-left: 8px; }
.g-ai { width: 318px; }
.g-power { width: 211px; }
.g-power .items { padding-left: 15px; }
.g-elements { width: 228px; }
.g-elements .items { padding-left: 12px; }
.g-spark { width: 85px; }
.items {
    display: flex;
    height: 97px;
}
.item {
    display: flex;
    flex-direction: column;
    align-items: center;
    text-align: center;
    font-size: 14px;
    line-height: 20px;
    padding-top: 5px;
    color: #323130;
    white-space: nowrap;
    box-sizing: border-box;
}
.item-more { margin-left: 1px; }
.w46 { width: 46px; }
.w54 { width: 54px; }
.w56 { width: 56px; }
.w60 { width: 60px; }
.w61 { width: 61px; }
.w72 { width: 72px; }
.w73 { width: 73px; }
.w84 { width: 84px; }
.w110 { width: 110px; }
.rb-icon {
    width: 38px;
    height: 38px;
    margin-bottom: 6px;
    flex-shrink: 0;
    overflow: visible;
}
.chev {
    display: inline-block;
    width: 5px;
    height: 5px;
    border-right: 1.3px solid #323130;
    border-bottom: 1.3px solid #323130;
    transform: rotate(45deg);
    margin: 0 0 3px 2px;
}
.group-name {
    text-align: center;
    font-size: 12.5px;
    line-height: 14px;
    color: #484644;
}
.collapse { position: absolute; left: 1902px; top: 143px; }

/* main area */
.main {
    display: flex;
    flex: 1;
    min-height: 0;
}
.rail {
    width: 51px;
    box-sizing: border-box;
    background-color: #f3f2f1;
    border-right: 1px solid #e1dfdd;
    flex-shrink: 0;
    padding-top: 0;
}
.rail-item {
    height: 50px;
    display: flex;
    align-items: center;
    justify-content: center;
    border-left: 3px solid transparent;
    padding-right: 3px;
}
.rail-active { border-left-color: #117865; height: 50px; }
.rail-txt { font: bold 9px "Noto Sans", sans-serif; fill: #8a8886; }
.center {
    width: 1417px;
    display: flex;
    flex-direction: column;
    flex-shrink: 0;
}
.center-top {
    flex: 1;
    display: flex;
    min-height: 0;
}

/* canvas, the visuals sit at free positions */
.canvas {
    width: 1190px;
    position: relative;
    background-color: #fff;
    overflow: hidden;
}
.visual {
    position: absolute;
    box-sizing: border-box;
    border: 1.5px solid #3b3a39;
    background-color: #fff;
}
.banner {
    left: 10px;
    top: 0;
    width: 1180px;
    height: 111px;
    background-color: #c6ecd2;
    display: flex;
    align-items: center;
    justify-content: center;
    font-family: "Open Sans", sans-serif;
    font-weight: 700;
    font-size: 39px;
    padding: 0 12px 12px 0;
    color: #333;
    border-top: none;
    border-right: 1px solid #3b3a39;
}
.card {
    display: flex;
    flex-direction: column;
    align-items: center;
}
.c-first-id { left: 10px; top: 130px; width: 253px; height: 155px; justify-content: flex-end; padding-bottom: 30px; }
.c-first-rev { left: 285px; top: 130px; width: 299px; height: 156px; justify-content: flex-end; padding-bottom: 31px; }
.c-active { left: 601px; top: 145px; width: 285px; height: 139px; }
.c-churned { left: 896px; top: 145px; width: 279px; height: 139px; }
.card-value {
    font-family: Roboto, sans-serif;
    font-weight: 500;
    font-size: 52px;
    line-height: 52px;
    margin-top: 39px;
    color: #252423;
}
.card-label {
    font-size: 14px;
    line-height: 20px;
    color: #605e5c;
}
.c-active .card-label, .c-churned .card-label { margin-top: 4px; }

.viz-title {
    font-family: Roboto, sans-serif;
    font-weight: 400;
    font-size: 14px;
    line-height: 20px;
    letter-spacing: .75px;
    color: #252423;
    padding: 0 0 0 4px;
}
.bar-visual {
    left: 10px;
    top: 310px;
    width: 292px;
    height: 340px;
    padding-top: 0;
    display: flex;
    flex-direction: column;
}
.bar-body {
    display: flex;
    margin-top: 9px;
}
.y-title {
    writing-mode: vertical-rl;
    transform: rotate(180deg);
    width: 14px;
    margin-left: 4px;
    height: 227px;
    text-align: center;
    font-family: "DejaVu Sans", sans-serif;
    font-size: 11.5px;
    line-height: 14px;
    color: #444;
}
.y-ticks {
    width: 24px;
    height: 241px;
    margin: -7px 0 0 6px;
    display: flex;
    flex-direction: column;
    justify-content: space-between;
    font-size: 11px;
    line-height: 14px;
    color: #777;
}
.plot-col { margin-left: 8px; }
.plot, .x-ticks {
    display: flex;
    gap: 5.16px;
}
.plot { height: 227px; }
.plot i {
    display: block;
    width: 15.2px;
    background-color: #118dff;
}
.x-ticks { margin-top: 6px; height: 18px; }
.x-ticks span {
    width: 15.2px;
    writing-mode: vertical-rl;
    transform: translateX(1.5px) rotate(180deg);
    font-family: "DejaVu Sans", sans-serif;
    font-size: 10.5px;
    line-height: 15px;
    color: #666;
    display: block;
    text-align: center;
}
.x-title {
    margin-top: 31px;
    padding-left: 44px;
    text-align: center;
    font-size: 12.5px;
    line-height: 16px;
    color: #444;
}
.h-scroll {
    margin: 0 5px 0 49px;
    height: 6px;
    background-color: #f0f0f0;
    border-radius: 3px;
}
.h-thumb {
    width: 216px;
    height: 6px;
    background-color: #b3b3b3;
    border-radius: 3px;
}

.table-visual {
    left: 315px;
    top: 310px;
    width: 369px;
    height: 340px;
    border: 1px solid #8a8a8a;
    padding: 1px 0 0 6px;
}
.data-table {
    border-collapse: collapse;
    table-layout: fixed;
    width: 338px;
    font-size: 11.5px;
    color: #444;
}
.data-table th, .data-table td {
    font-weight: normal;
    text-align: left;
    padding: 0 0 0 4px;
    height: 19.5px;
    line-height: 14px;
    white-space: nowrap;
    overflow: hidden;
}
.data-table th:nth-child(1) { width: 50px; }
.data-table th:nth-child(2) { width: 50px; }
.data-table th:nth-child(3) { width: 171px; }
.data-table th:nth-child(4) { width: 51px; }
.data-table thead th {
    height: 26px;
    padding-bottom: 5px;
    border-bottom: 1px solid #8cc8ff;
}
.blank td { height: 18px; }
.odd { background-color: #ececec; }
.sel { background-color: #d2d2d2; }
.sel-cell { background-color: #b9b9b9; }
.hd { position: absolute; background-color: #8a8886; }
.hd-tl, .hd-tr, .hd-bl, .hd-br {
    width: 10px;
    height: 10px;
    background-color: transparent;
    border: 0 solid #8a8886;
}
.hd-tl { left: -1px; top: -1px; border-width: 3px 0 0 3px; }
.hd-tr { right: -1px; top: -1px; border-width: 3px 3px 0 0; }
.hd-bl { left: -1px; bottom: -1px; border-width: 0 0 3px 3px; }
.hd-br { right: -1px; bottom: -1px; border-width: 0 3px 3px 0; }
.hd-t, .hd-b { left: 176px; width: 15px; height: 4px; }
.hd-t { top: -1px; }
.hd-b { bottom: -1px; }
.hd-l, .hd-r { top: 163px; width: 4px; height: 15px; }
.hd-l { left: -1px; }
.hd-r { right: -1px; }

.visual-head {
    position: absolute;
    left: 584px;
    top: 282px;
    width: 97px;
    height: 25px;
    background-color: #fff;
    display: flex;
    align-items: center;
    padding-left: 3px;
    box-sizing: border-box;
}
.visual-head svg:nth-child(2) { margin-left: 14px; }
.head-dots { display: flex; gap: 3px; margin-left: 17px; }
.head-dots i {
    display: block;
    width: 2.500px;
    height: 2.500px;
    border-radius: 50%;
    background-color: #484644;
}

.donut-visual {
    left: 701px;
    top: 310px;
    width: 474px;
    height: 330px;
}
.donut-svg { display: block; }
.leader { fill: none; stroke: #bbb; stroke-width: 1; }
.d-label { font: 11px "Noto Sans", sans-serif; fill: #777; }
.lg-title { font: bold 11.5px "Noto Sans", sans-serif; fill: #444; }
.lg-item { font: 11.5px "Noto Sans", sans-serif; fill: #666; }

.page-edge {
    position: absolute;
    left: 2px;
    right: 0;
    top: 669px;
    border-top: 2px dotted #222;
}

/* filters pane */
.filters {
    width: 227px;
    flex-shrink: 0;
    background-color: #fff;
    position: relative;
    overflow: hidden;
    box-sizing: border-box;
    padding-left: 10px;
    border-left: 1px solid #c8c6c4;
}
.pane-head {
    height: 48px;
    display: flex;
    align-items: center;
    margin-left: 4px;
}
.pane-title {
    font-size: 18.5px;
    font-weight: 600;
    color: #252423;
}
.funnel { margin-right: 8px; }
.eye { margin-left: 57px; }
.double { flex-shrink: 0; }
.pane-head .double { margin-left: 21px; }
.f-search {
    width: 201px;
    height: 42px;
    margin-top: 9px;
    box-sizing: border-box;
    border: 1px solid #b3b0ad;
    border-radius: 2px;
    display: flex;
    align-items: center;
    gap: 11px;
    padding-left: 14px;
    font-size: 15px;
    color: #484644;
}
.f-divider {
    height: 1px;
    background-color: #c8c6c4;
    margin: 5px 0 0 -10px;
}
.f-section {
    width: 201px;
    height: 32px;
    line-height: 32px;
    margin-top: 27px;
    margin-bottom: 5px;
    font-size: 14px;
    color: #323130;
    display: flex;
    justify-content: space-between;
    white-space: nowrap;
}
.f-first { margin-top: 15px; }
.more { letter-spacing: 1px; margin-top: -3px; }
.f-card {
    width: 206px;
    height: 76px;
    box-sizing: border-box;
    border: 1px solid #d2d0ce;
    border-radius: 2px;
    margin-bottom: 8.5px;
    padding: 10px 0 0 10px;
    font-size: 14px;
    line-height: 22px;
    color: #323130;
}
.f-card div + div { margin-top: 11px; }
.f-add {
    width: 206px;
    height: 57px;
    box-sizing: border-box;
    border: 1px solid #d2d0ce;
    border-radius: 2px;
    display: flex;
    align-items: center;
    justify-content: center;
    font-size: 14px;
    color: #323130;
}
.f-add-tall { height: 57.5px; }
.v-scroll {
    position: absolute;
    left: 219px;
    top: 115px;
    width: 6px;
    height: 565px;
    border-radius: 3px;
    background-color: #8a8886;
}

/* page tabs */
.pagebar {
    height: 44px;
    background-color: #f3f2f1;
    display: flex;
    flex-shrink: 0;
    box-sizing: border-box;
}
.layout-btn {
    display: flex;
    align-items: flex-start;
    justify-content: center;
}
.layout-active {
    width: 30px;
    margin-left: 12px;
    padding-top: 7px;
    height: 38px;
    box-sizing: border-box;
    border-bottom: 3px solid #117865;
}
.layout-phone { width: 16px; margin-left: 32px; padding-top: 6px; }
.page-arrow {
    width: 0;
    height: 0;
    margin-top: 15px;
    border-top: 5px solid transparent;
    border-bottom: 5px solid transparent;
}
.arrow-left { margin-left: 27px; border-right: 5px solid #c8c6c4; }
.arrow-right { margin-left: 23px; border-left: 5px solid #c8c6c4; }
.page-tab {
    width: 94px;
    margin-left: 9px;
    box-sizing: border-box;
    background-color: #fff;
    border-left: 1px solid #c8c6c4;
    border-bottom: 5px solid #117865;
    padding-top: 3px;
    font-size: 14px;
    font-weight: 500;
    display: flex;
    align-items: center;
    justify-content: center;
}
.page-add {
    width: 49px;
    margin-left: 1px;
    background-color: #117865;
    display: flex;
    align-items: center;
    justify-content: center;
}

/* visualizations pane */
.viz-pane {
    width: 227px;
    box-sizing: border-box;
    background-color: #f3f2f1;
    border-right: 1px solid #e1dfdd;
    flex-shrink: 0;
}
.viz-head, .data-head {
    height: 48px;
    padding: 1px 11px 0 11px;
    box-sizing: border-box;
    display: flex;
    align-items: center;
    justify-content: space-between;
}
.viz-head .double { margin-right: -3px; }
.build-label {
    padding-left: 11px;
    font-size: 14px;
    line-height: 20px;
    font-weight: 500;
}
.build-tabs {
    display: flex;
    margin: 4px 0 0 11px;
}
.build-tab {
    width: 40px;
    height: 40px;
    display: flex;
    align-items: center;
    justify-content: center;
}
.build-tab-active { background-color: #d2d0ce; border-radius: 2px; }
.build-tab:nth-child(2) { margin-left: 44px; }
.build-tab:nth-child(3) { margin-left: 40px; }
.build-line {
    position: relative;
    margin-top: 15px;
    height: 1px;
    background-color: #a19f9d;
}
.build-line svg { position: absolute; left: 20px; top: -9px; }
.gallery {
    display: grid;
    grid-template-columns: repeat(6, 35px);
    grid-auto-rows: 35px;
    margin: 7px 0 0 9px;
}
.gi {
    display: flex;
    align-items: center;
    justify-content: center;
}
.gi svg { width: 24px; height: 24px; overflow: visible; }
.gi-selected { position: relative; }
.gi-selected::before {
    content: "";
    position: absolute;
    inset: 2px;
    border: 1px solid #252423;
}
.gi-more { gap: 4px; padding-bottom: 6px; box-sizing: border-box; }
.gi-more span {
    width: 2px;
    height: 2px;
    background-color: #323130;
    border-radius: 50%;
}
.viz-divider {
    height: 1px;
    background-color: #e1dfdd;
    margin-top: 7px;
}
.well-label {
    margin: 10px 0 0 16px;
    font-size: 14px;
    line-height: 20px;
    color: #484644;
}
.well {
    margin: 6px 0 0 6px;
    width: 213px;
    height: 135px;
    box-sizing: border-box;
    background-color: #fff;
    border: 1px dashed #c8c6c4;
    padding: 4px 3px;
    display: flex;
    flex-direction: column;
    gap: 2px;
}
.pill {
    height: 28px;
    flex-shrink: 0;
    box-sizing: border-box;
    background-color: #edebe9;
    border: 1px solid #c8c6c4;
    border-radius: 2px;
    display: flex;
    align-items: center;
    padding-left: 4px;
    font-size: 14px;
    position: relative;
    color: #323130;
}
.p-chev {
    position: absolute;
    right: 26px;
    top: 5px;
    width: 8px;
    height: 8px;
    border-right: 1px solid #323130;
    border-bottom: 1px solid #323130;
    transform: rotate(45deg);
}
.p-x {
    position: absolute;
    right: 5px;
    top: 7px;
    width: 11px;
    height: 11px;
    background:
        linear-gradient(45deg, transparent 46%, #323130 46%, #323130 54%, transparent 54%),
        linear-gradient(-45deg, transparent 46%, #323130 46%, #323130 54%, transparent 54%);
}
.drill-title {
    margin: 14px 0 0 16px;
    font-size: 14px;
    line-height: 20px;
    font-weight: 500;
    color: #484644;
}
.drill-row {
    height: 20px;
    margin-left: 16px;
    width: 183px;
    display: flex;
    align-items: center;
    justify-content: space-between;
    font-size: 14px;
    color: #484644;
}
.dr-cross { margin-top: 10px; }
.dr-keep { margin-top: 14px; }
.toggle {
    width: 40px;
    height: 20px;
    box-sizing: border-box;
    border-radius: 10px;
    display: flex;
    align-items: center;
    font-size: 10.5px;
    gap: 2px;
}
.toggle b { font-weight: normal; }
.toggle i {
    display: block;
    width: 10px;
    height: 10px;
    border-radius: 50%;
}
.toggle-off { border: 1px solid #8a8886; background-color: #fff; padding-left: 5px; color: #605e5c; }
.toggle-off i { background-color: #605e5c; }
.toggle-on { background-color: #117865; color: #fff; padding-left: 6px; }
.toggle-on i { background-color: #fff; }
.drill-add {
    margin: 14px 0 0 6px;
    width: 213px;
    height: 32px;
    box-sizing: border-box;
    background-color: #fff;
    border: 1px dashed #c8c6c4;
    display: flex;
    align-items: center;
    padding-left: 10px;
    font-size: 14px;
    color: #323130;
    white-space: nowrap;
}

/* data pane */
.data-pane {
    flex: 1;
    background-color: #f3f2f1;
}
.data-head .double { margin-right: -3px; }
.d-search {
    margin: 10px 0 0 6px;
    width: 214px;
    height: 30px;
    box-sizing: border-box;
    background-color: #fff;
    border: 1px solid #e1dfdd;
    border-bottom-color: #8a8886;
    border-radius: 4px;
    display: flex;
    align-items: center;
    gap: 8px;
    padding-left: 15px;
    font-size: 16px;
    color: #605e5c;
}
.tree-root {
    display: flex;
    align-items: center;
    height: 20px;
    margin-top: 15px;
    padding-left: 16px;
    font-size: 14px;
    color: #484644;
}
.tree-table {
    position: relative;
    width: 16px;
    height: 16px;
    margin: 0 7px 0 6px;
}
.tree-table svg { display: block; }
.tree-badge { position: absolute; left: 8px; top: 7px; }
.field {
    height: 30px;
    display: flex;
    align-items: center;
    padding-left: 55px;
    font-size: 14px;
    color: #484644;
    white-space: nowrap;
}
.tree-root + .field { margin-top: 5px; }
.cb {
    display: block;
    width: 15px;
    height: 15px;
    box-sizing: border-box;
    background-color: #f3f2f1;
    border: 1px solid #a19f9d;
    border-radius: 2px;
    position: relative;
}
.cb-on { background-color: #117865; border-color: #8a8886; }
.cb-on::after {
    content: "";
    position: absolute;
    left: 4px;
    top: 1px;
    width: 4px;
    height: 8px;
    border-right: 1.5px solid #fff;
    border-bottom: 1.5px solid #fff;
    transform: rotate(45deg);
}
.calc {
    display: block;
    width: 16px;
    margin: 0 7px 0 10px;
    flex-shrink: 0;
}

/* status bar */
.statusbar {
    height: 30px;
    flex-shrink: 0;
    box-sizing: border-box;
    background-color: #f3f2f1;
    border-top: 1px solid #e1dfdd;
    border-bottom: 1px solid #111;
    display: flex;
    align-items: center;
    justify-content: space-between;
}
.page-count { margin-left: 5px; padding-top: 3px; font-size: 14px; color: #484644; }
.zoom {
    display: flex;
    align-items: center;
    margin-right: 23px;
}
.z-minus { width: 5px; height: 2px; background-color: #605e5c; }
.z-track {
    position: relative;
    width: 125px;
    height: 1.500px;
    background-color: #605e5c;
    margin-left: 6px;
}
.z-mid { position: absolute; left: 62px; top: -4px; width: 1px; height: 9px; background-color: #605e5c; }
.z-thumb { position: absolute; left: 41px; top: -7px; width: 5px; height: 15px; background-color: #605e5c; }
.z-plus {
    margin-left: 7px;
    width: 11px;
    height: 11px;
    background:
        linear-gradient(#605e5c, #605e5c) center / 11px 1.5px no-repeat,
        linear-gradient(#605e5c, #605e5c) center / 1.5px 11px no-repeat;
}
.z-val { margin-left: 14px; font-size: 14px; color: #605e5c; }
.z-fit { margin-left: 24px; }

/* taskbar */
.taskbar {
    height: 60px;
    flex-shrink: 0;
    display: flex;
    align-items: center;
    position: relative;
    background: linear-gradient(90deg, #d8d8d6 0%, #d8dfd3 20%, #cfe8cc 45%, #cfe8cc 80%, #cfe4ce 100%);
}
.weather {
    width: 474px;
    display: flex;
    align-items: center;
    position: relative;
    flex-shrink: 0;
    padding-left: 25px;
    box-sizing: border-box;
}
.w-badge {
    position: absolute;
    left: 39px;
    top: -2px;
    width: 20px;
    height: 20px;
    border-radius: 50%;
    background-color: #c42b1c;
    color: white;
    font-size: 13px;
    line-height: 20px;
    text-align: center;
}
.w-text { margin-left: 9px; font-size: 14px; line-height: 20px; color: #333; }
.start { width: 30px; height: 30px; flex-shrink: 0; }
.tb-search {
    margin-left: 18px;
    width: 273px;
    height: 38px;
    flex-shrink: 0;
    box-sizing: border-box;
    background-color: #f0f6ef;
    border-radius: 19px;
    border: 1px solid #dfe8dd;
    display: flex;
    align-items: center;
    padding-left: 13px;
    font-size: 15.5px;
    color: #555;
    position: relative;
}
.tb-search span { margin-left: 12px; }
.puffin { position: absolute; right: 15px; top: -4px; }
.apps {
    display: flex;
    margin-left: 4px;
}
.app-icon {
    width: 55px;
    height: 48px;
    display: flex;
    align-items: center;
    justify-content: center;
    position: relative;
}
.app-icon svg { width: 30px; height: 30px; overflow: visible; }
.app-active::before {
    content: "";
    position: absolute;
    left: 3px;
    right: 4px;
    top: 0;
    bottom: 0;
    background-color: #e6f0e4;
    border-radius: 5px;
}
.app-active svg { position: relative; }
.app-t { font: bold 13px "Noto Sans", sans-serif; fill: #fff; }
.app-b { font: 11px "Noto Sans", sans-serif; fill: #fff; }
.tray {
    position: absolute;
    left: 1586px;
    right: 23px;
    top: 0;
    height: 60px;
    display: flex;
    align-items: center;
}
.tray-net { margin-left: 22px; }
.lang {
    width: 40px;
    margin-left: 18px;
    text-align: center;
    font-size: 14px;
    line-height: 21px;
    color: #333;
}
.tray-mon { margin-left: 16px; }
.tray-vol { margin-left: 7px; }
.tray-bat { margin-left: 7px; }
.clock {
    margin-left: auto;
    text-align: right;
    font-size: 14.5px;
    line-height: 21px;
    color: #333;
}
```
